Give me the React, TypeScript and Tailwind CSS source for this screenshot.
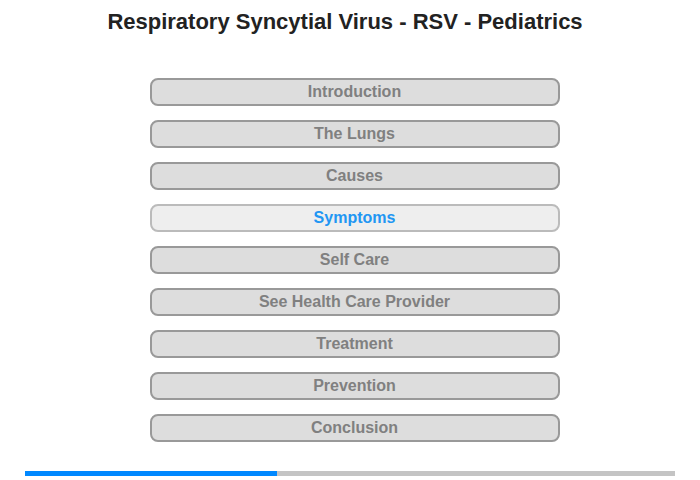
const topics = [
  'Introduction',
  'The Lungs',
  'Causes',
  'Symptoms',
  'Self Care',
  'See Health Care Provider',
  'Treatment',
  'Prevention',
  'Conclusion',
];

const current = 'Symptoms';

export default function App() {
  return (
    <div className="w-[700px] h-[480px] bg-white font-['Liberation_Sans',Arial,sans-serif] flex flex-col">
      <h1 className="pt-[9px] pr-[10px] text-center text-[22px] leading-[25px] font-bold text-[#222]">
        Respiratory Syncytial Virus - RSV - Pediatrics
      </h1>

      <div className="mt-[44px] pl-[9px] flex flex-col items-center gap-[14px]">
        {topics.map(t => {
          const active = t === current;
          return (
            <div
              key={t}
              className={
                active
                  ? 'w-[410px] h-[28px] rounded-[8px] border-2 border-[#bbbbbb] bg-[#eeeeee] flex items-center justify-center text-[16px] font-bold text-[#2196f3]'
                  : 'w-[410px] h-[28px] rounded-[8px] border-2 border-[#999999] bg-[#dddddd] flex items-center justify-center text-[16px] font-bold text-[#808080]'
              }
            >
              {t}
            </div>
          );
        })}
      </div>

      {/* progress */}
      <div className="mt-[29px] mx-[25px] h-[5px] bg-[#c4c4c4] flex">
        <div className="w-[252px] h-full bg-[#0088ff]" />
      </div>
    </div>
  );
}
